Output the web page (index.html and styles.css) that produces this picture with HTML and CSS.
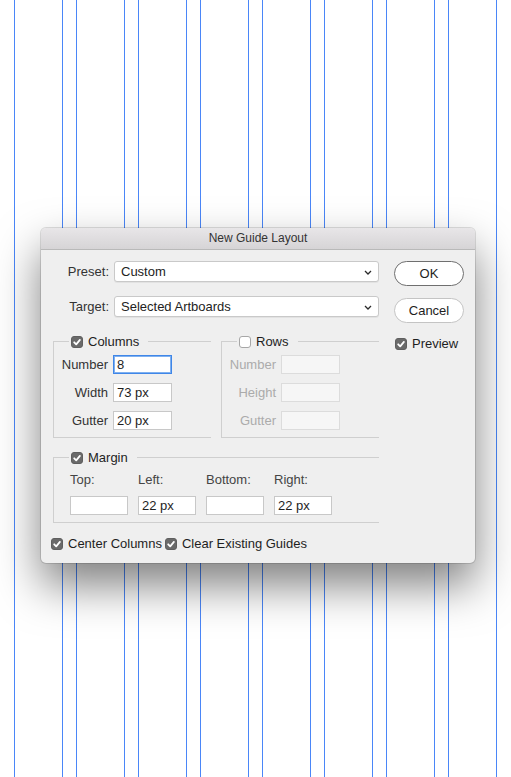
FILE: index.html
```html
<!DOCTYPE html>
<html lang="en">
<head>
<meta charset="utf-8">
<title>New Guide Layout</title>
<link rel="stylesheet" href="styles.css">
</head>
<body>
<div class="page">
  <div class="guides">
    <div class="guide-col"></div>
    <div class="guide-col"></div>
    <div class="guide-col"></div>
    <div class="guide-col"></div>
    <div class="guide-col"></div>
    <div class="guide-col"></div>
    <div class="guide-col"></div>
    <div class="guide-col"></div>
  </div>

  <div class="dialog">
    <div class="titlebar">New Guide Layout</div>
    <div class="dialog-body">
      <div class="main">
        <div class="field-row">
          <span class="field-label">Preset:</span>
          <div class="select"><span>Custom</span>
            <svg class="chev" width="8" height="5" viewBox="0 0 8 5"><path d="M1 1 L4 4 L7 1" fill="none" stroke="#2a2a2a" stroke-width="1.3"/></svg>
          </div>
        </div>
        <div class="field-row">
          <span class="field-label">Target:</span>
          <div class="select"><span>Selected Artboards</span>
            <svg class="chev" width="8" height="5" viewBox="0 0 8 5"><path d="M1 1 L4 4 L7 1" fill="none" stroke="#2a2a2a" stroke-width="1.3"/></svg>
          </div>
        </div>

        <div class="groups">
          <div class="group">
            <div class="group-head">
              <span class="lead"></span>
              <span class="cb checked"><svg width="12" height="12" viewBox="0 0 12 12"><path d="M3.2 6.3 L5.2 8.3 L8.9 3.9" fill="none" stroke="#fff" stroke-width="1.8" stroke-linecap="round" stroke-linejoin="round"/></svg></span>
              <span class="group-title">Columns</span>
              <span class="rest"></span>
            </div>
            <div class="group-body">
              <div class="in-row"><span class="in-label">Number</span><div class="input focus">8</div></div>
              <div class="in-row"><span class="in-label">Width</span><div class="input">73 px</div></div>
              <div class="in-row"><span class="in-label">Gutter</span><div class="input">20 px</div></div>
            </div>
          </div>
          <div class="group">
            <div class="group-head">
              <span class="lead"></span>
              <span class="cb"></span>
              <span class="group-title">Rows</span>
              <span class="rest"></span>
            </div>
            <div class="group-body">
              <div class="in-row disabled"><span class="in-label">Number</span><div class="input"></div></div>
              <div class="in-row disabled"><span class="in-label">Height</span><div class="input"></div></div>
              <div class="in-row disabled"><span class="in-label">Gutter</span><div class="input"></div></div>
            </div>
          </div>
        </div>

        <div class="group margin-group">
          <div class="group-head">
            <span class="lead"></span>
            <span class="cb checked"><svg width="12" height="12" viewBox="0 0 12 12"><path d="M3.2 6.3 L5.2 8.3 L8.9 3.9" fill="none" stroke="#fff" stroke-width="1.8" stroke-linecap="round" stroke-linejoin="round"/></svg></span>
            <span class="group-title">Margin</span>
            <span class="rest"></span>
          </div>
          <div class="margin-body">
            <span class="m-label">Top:</span>
            <span class="m-label">Left:</span>
            <span class="m-label">Bottom:</span>
            <span class="m-label">Right:</span>
            <div class="input"></div>
            <div class="input">22 px</div>
            <div class="input"></div>
            <div class="input">22 px</div>
          </div>
        </div>

        <div class="bottom-row">
          <label class="check-item"><span class="cb checked"><svg width="12" height="12" viewBox="0 0 12 12"><path d="M3.2 6.3 L5.2 8.3 L8.9 3.9" fill="none" stroke="#fff" stroke-width="1.8" stroke-linecap="round" stroke-linejoin="round"/></svg></span>Center Columns</label>
          <label class="check-item"><span class="cb checked"><svg width="12" height="12" viewBox="0 0 12 12"><path d="M3.2 6.3 L5.2 8.3 L8.9 3.9" fill="none" stroke="#fff" stroke-width="1.8" stroke-linecap="round" stroke-linejoin="round"/></svg></span>Clear Existing Guides</label>
        </div>
      </div>

      <div class="side">
        <div class="btn default">OK</div>
        <div class="btn cancel">Cancel</div>
        <label class="check-item preview"><span class="cb checked"><svg width="12" height="12" viewBox="0 0 12 12"><path d="M3.2 6.3 L5.2 8.3 L8.9 3.9" fill="none" stroke="#fff" stroke-width="1.8" stroke-linecap="round" stroke-linejoin="round"/></svg></span>Preview</label>
      </div>
    </div>
  </div>
</div>
</body>
</html>
```

FILE: styles.css
```css
* { box-sizing: border-box; }

html, body {
  margin: 0;
  padding: 0;
  background: #ffffff;
}

body {
  font-family: "Liberation Sans", Arial, sans-serif;
  font-size: 13px;
  color: #222;
}

.page {
  position: relative;
  width: 511px;
  height: 777px;
  overflow: hidden;
}

.guides {
  display: flex;
  gap: 13px;
  padding-left: 14px;
  height: 100%;
}

.guide-col {
  width: 49px;
  height: 100%;
  border-left: 1px solid #4a86f8;
  border-right: 1px solid #4a86f8;
}

.dialog {
  position: absolute;
  left: 41px;
  top: 228px;
  width: 434px;
  height: 335px;
  background: #efefef;
  border-radius: 5px;
  box-shadow: 0 0 0 1px rgba(0, 0, 0, 0.12), 0 22px 45px rgba(0, 0, 0, 0.5);
  overflow: hidden;
}

.titlebar {
  height: 22px;
  line-height: 21px;
  text-align: center;
  font-size: 12px;
  color: #333;
  background: linear-gradient(#e8e6e8, #d6d4d6);
  border-bottom: 1px solid #b9b9b9;
}

.dialog-body {
  display: flex;
  padding: 11px 10px 8px 10px;
}

.main {
  width: 328px;
  display: flex;
  flex-direction: column;
}

.field-row {
  display: flex;
  align-items: center;
  gap: 5px;
  height: 21px;
}

.field-row + .field-row {
  margin-top: 14px;
}

.field-label {
  width: 58px;
  text-align: right;
  color: #333;
}

.select {
  position: relative;
  width: 265px;
  height: 21px;
  background: #fff;
  border: 1px solid #c9c9c9;
  border-radius: 3px;
  box-shadow: 0 1px 0 rgba(0, 0, 0, 0.05);
  padding-left: 6px;
  line-height: 19px;
  color: #222;
}

.chev {
  position: absolute;
  right: 6px;
  top: 8px;
}

.groups {
  display: flex;
  gap: 10px;
  margin-top: 19px;
  margin-left: 2px;
}

.group {
  width: 158px;
}

.group-head {
  display: flex;
  align-items: flex-end;
  height: 12px;
}

.lead {
  width: 16px;
  height: 7px;
  border-left: 1px solid #cfcfcf;
  border-top: 1px solid #cfcfcf;
  margin-right: 2px;
}

.rest {
  flex: 1;
  height: 7px;
  border-top: 1px solid #cfcfcf;
  margin-left: 9px;
}

.group-title {
  align-self: center;
  line-height: 16px;
  color: #1e1e1e;
}

.cb {
  display: inline-flex;
  align-items: center;
  justify-content: center;
  flex: none;
  width: 12px;
  height: 12px;
  border-radius: 3px;
  background: #fff;
  border: 1px solid #a7a7a7;
  margin-right: 5px;
  align-self: center;
}

.cb.checked {
  background: #6a6a6a;
  border-color: #5f5f5f;
}

.cb svg {
  display: block;
  flex: none;
}

.group-body {
  border-left: 1px solid #cfcfcf;
  border-bottom: 1px solid #cfcfcf;
  padding: 7px 0 7px 0;
  display: flex;
  flex-direction: column;
  gap: 9px;
}

.in-row {
  display: flex;
  align-items: center;
  gap: 5px;
  height: 19px;
}

.in-label {
  width: 54px;
  text-align: right;
  color: #333;
}

.input {
  width: 59px;
  height: 19px;
  background: #fff;
  border: 1px solid #c8c8c8;
  padding-left: 3px;
  line-height: 17px;
  color: #1e1e1e;
}

.input.focus {
  border-color: #3f86e8;
  box-shadow: inset 0 0 0 1px #7fb0ef;
}

.in-row.disabled .in-label {
  color: #ababab;
}

.in-row.disabled .input {
  background: #f6f6f6;
  border-color: #dcdcdc;
}

.margin-group {
  width: 326px;
  margin-left: 2px;
  margin-top: 14px;
}

.margin-body {
  border-left: 1px solid #cfcfcf;
  border-bottom: 1px solid #cfcfcf;
  padding: 8px 0 7px 16px;
  display: grid;
  grid-template-columns: repeat(4, 58px);
  column-gap: 10px;
  row-gap: 8px;
}

.margin-body .input {
  width: 58px;
}

.m-label {
  line-height: 16px;
  color: #444;
}

.bottom-row {
  display: flex;
  gap: 3px;
  margin-top: 13px;
}

.check-item {
  display: flex;
  align-items: center;
  line-height: 16px;
  color: #1e1e1e;
}

.side {
  width: 70px;
  margin-left: 15px;
  display: flex;
  flex-direction: column;
}

.btn {
  height: 25px;
  border-radius: 13px;
  background: #fff;
  text-align: center;
  line-height: 23px;
  color: #1e1e1e;
}

.btn.default {
  border: 1px solid #6f6f6f;
}

.btn.cancel {
  margin-top: 12px;
  border: 1px solid #c4c4c4;
}

.preview {
  margin-top: 13px;
  margin-left: 1px;
}
```
